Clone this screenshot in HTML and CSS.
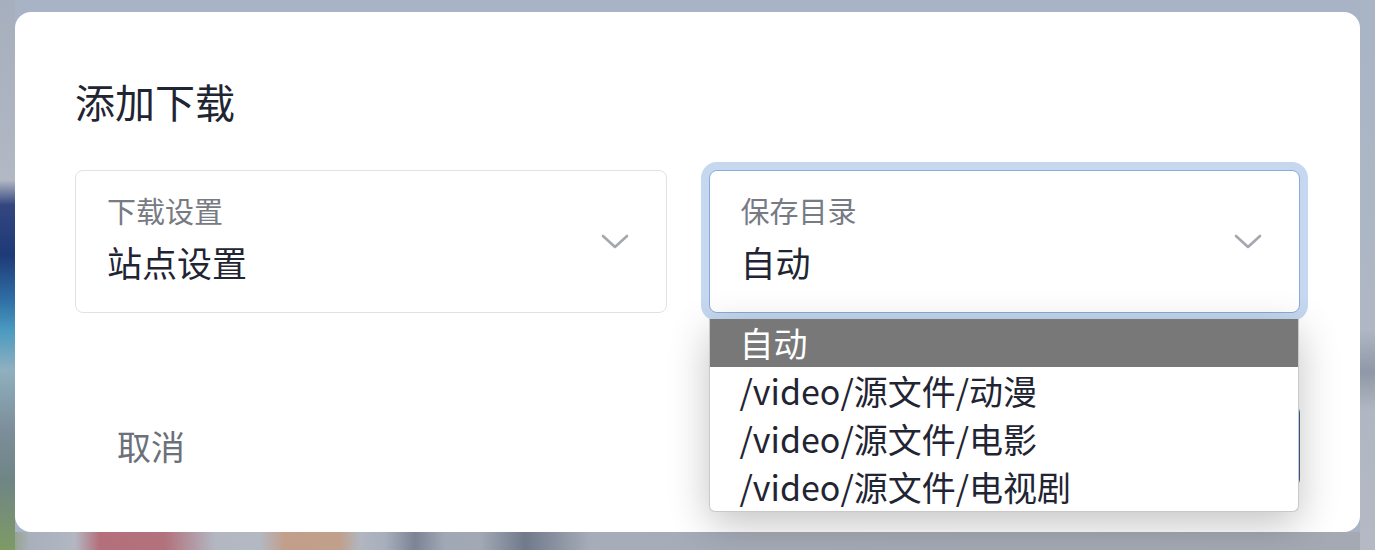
FILE: index.html
```html
<!DOCTYPE html>
<html lang="zh-CN">
<head>
<meta charset="utf-8">
<title>添加下载</title>
<link rel="stylesheet" href="styles.css">
</head>
<body>
<div class="backdrop">
  <div class="modal">
    <h2 class="title">添加下载</h2>
    <div class="fields">
      <div class="field">
        <div class="field-text">
          <div class="label">下载设置</div>
          <div class="value">站点设置</div>
        </div>
        <svg class="chevron" width="28" height="16" viewBox="0 0 28 16"><path d="M2 2 L14 13 L26 2" fill="none" stroke="#a3a7ae" stroke-width="2.6" stroke-linecap="round" stroke-linejoin="round"/></svg>
      </div>
      <div class="field-wrap">
        <div class="field focused">
          <div class="field-text">
            <div class="label">保存目录</div>
            <div class="value">自动</div>
          </div>
          <svg class="chevron" width="28" height="16" viewBox="0 0 28 16"><path d="M2 2 L14 13 L26 2" fill="none" stroke="#a3a7ae" stroke-width="2.6" stroke-linecap="round" stroke-linejoin="round"/></svg>
        </div>
        <ul class="menu">
          <li class="option selected">自动</li>
          <li class="option">/video/源文件/动漫</li>
          <li class="option">/video/源文件/电影</li>
          <li class="option">/video/源文件/电视剧</li>
        </ul>
      </div>
    </div>
    <div class="footer">
      <button class="btn-cancel">取消</button>
      <button class="btn-ok">确定</button>
    </div>
  </div>
</div>
</body>
</html>
```
FILE: styles.css
```css
html, body {
  margin: 0;
  height: 100%;
}
body {
  font-family: "Noto Sans CJK SC", "Noto Sans", sans-serif;
  background:
    linear-gradient(to bottom, #a6afbd 0, #b2b8c4 180px, #34467f 205px, #1d3a78 255px, #2f6fa5 300px, #4a9ac0 330px, #8fb0bf 370px, #7c8e9a 430px, #6f8585 480px, #7f9a66 550px) left top / 15px 100% no-repeat,
    linear-gradient(to bottom, #a9b4c5 0, #afb7c4 330px, #8f98a6 372px, #b1b7c2 410px, #b4b9c3 550px) right top / 15px 100% no-repeat,
    linear-gradient(to right, #86976c 0, #a9b0bb 30px, #b2b7c2 75px, #b46f7a 100px, #b2727c 165px, #b2b7c2 215px, #b3b8c2 260px, #c29e8b 285px, #c0a08c 340px, #b1b6c0 360px, #a8aebb 385px, #7c8495 415px, #a1a8b5 445px, #a2a9b5 480px, #707a8b 525px, #a6acb8 590px, #a4a9b3 1375px) left bottom / 100% 18px no-repeat,
    #a8b4c6;
}
.backdrop {
  box-sizing: border-box;
  height: 100%;
  padding: 12px 15px 18px;
}
.modal {
  box-sizing: border-box;
  height: 520px;
  background: #ffffff;
  border-radius: 16px;
  padding: 61px 60px 45px;
  display: flex;
  flex-direction: column;
}
.title {
  margin: 0;
  font-size: 40px;
  line-height: 56px;
  font-weight: 400;
  color: #1f2533;
}
.fields {
  margin-top: 41px;
  display: grid;
  grid-template-columns: 1fr 1fr;
  column-gap: 42px;
}
.field-wrap {
  position: relative;
}
.field {
  box-sizing: border-box;
  height: 143px;
  border: 1px solid #e1e2e5;
  border-radius: 8px;
  padding: 19px 37px 0 31px;
  display: flex;
  align-items: flex-start;
  justify-content: space-between;
  background: #fff;
}
.field.focused {
  border-color: #8aabd9;
  box-shadow: 0 0 0 8px #c5d8ef;
}
.field-text {
  display: flex;
  flex-direction: column;
  gap: 10px;
}
.label {
  font-size: 29px;
  line-height: 40px;
  color: #777b83;
}
.value {
  font-size: 35px;
  line-height: 44px;
  color: #1f2533;
}
.chevron {
  margin-top: 44px;
  flex: none;
}
.menu {
  position: absolute;
  top: calc(100% + 6px);
  left: 0;
  right: 1px;
  margin: 0;
  padding: 0;
  list-style: none;
  background: #fff;
  border: 1px solid #c9c9c9;
  border-top: none;
  border-radius: 0 0 6px 6px;
  overflow: hidden;
  box-shadow: 0 12px 40px rgba(0, 0, 0, 0.24);
  z-index: 2;
}
.option {
  height: 48px;
  line-height: 48px;
  padding-left: 30px;
  font-size: 34px;
  color: #1f2533;
  white-space: nowrap;
}
.option.selected {
  background: #787878;
  color: #ffffff;
}
.footer {
  margin-top: 92px;
  display: flex;
  justify-content: space-between;
  align-items: center;
}
.btn-cancel {
  height: 82px;
  padding: 0 42px;
  border: none;
  background: transparent;
  font-family: inherit;
  font-size: 34px;
  line-height: 78px;
  color: #6b7079;
  border-radius: 8px;
}
.btn-ok {
  height: 82px;
  width: 220px;
  border: none;
  border-radius: 8px;
  background: #3f5f94;
  color: #fff;
  font-family: inherit;
  font-size: 34px;
}
```
